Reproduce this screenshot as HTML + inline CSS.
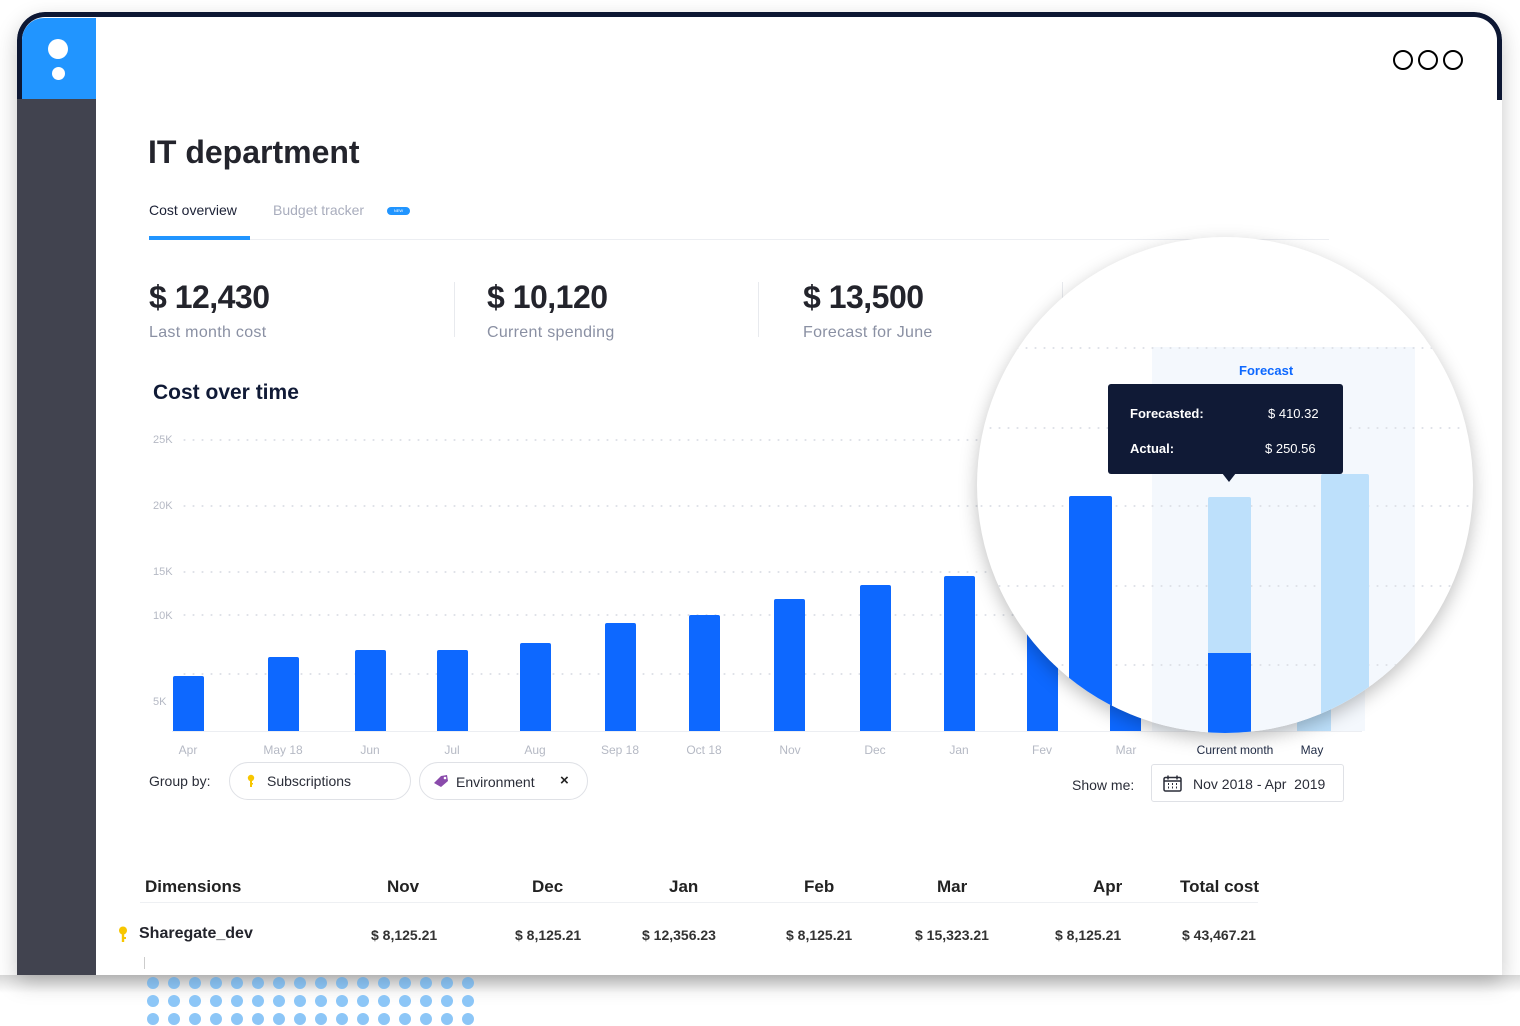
<!DOCTYPE html>
<html><head><meta charset="utf-8"><style>
*{margin:0;padding:0;box-sizing:border-box}
body{width:1520px;height:1026px;background:#fff;position:relative;overflow:hidden;font-family:"Liberation Sans",sans-serif;color:#1f2230}
.a{position:absolute;white-space:nowrap}
.bar{position:absolute;background:#0d68ff;border-radius:2px 2px 0 0}
.grid{position:absolute;height:2px;background-image:radial-gradient(circle,#dfe2e8 0.9px,transparent 1.2px);background-size:9px 2px}
.ax{position:absolute;font-size:11px;color:#b5b9c4}
.ml{position:absolute;font-size:12px;color:#b5b9c4;transform:translateX(-50%);top:743px}
.th{position:absolute;font-size:17px;font-weight:bold;color:#222;top:877px}
.td{position:absolute;font-size:14px;font-weight:bold;color:#333;top:927px}
.sv{position:absolute;top:279px;font-size:32px;font-weight:bold;color:#23242c;letter-spacing:-.5px}
.sl{position:absolute;top:324px;font-size:16px;color:#8a90a3;letter-spacing:.3px}
</style></head><body>
<div class="a" style="left:17px;top:12px;width:1485px;height:963px;background:#fff;border-radius:28px 28px 0 0;box-shadow:0 8px 22px rgba(0,0,0,.22);overflow:hidden">
  <div class="a" style="left:0;top:0;width:1485px;height:88px;border:5px solid #0d1733;border-bottom:none;border-radius:28px 28px 0 0"></div>
  <div class="a" style="left:5px;top:6px;width:74px;height:81px;background:#2195ff;border-radius:22px 0 0 0"></div>
  <div class="a" style="left:0;top:87px;width:79px;height:880px;background:#41434f"></div>
  <div class="a" style="left:31px;top:27px;width:20px;height:20px;border-radius:50%;background:#fff"></div>
  <div class="a" style="left:35px;top:55px;width:13px;height:13px;border-radius:50%;background:#fff"></div>
</div>
<div class="a" style="left:1393px;top:50px;width:20px;height:20px;border:2.5px solid #000;border-radius:50%"></div>
<div class="a" style="left:1418px;top:50px;width:20px;height:20px;border:2.5px solid #000;border-radius:50%"></div>
<div class="a" style="left:1443px;top:50px;width:20px;height:20px;border:2.5px solid #000;border-radius:50%"></div>

<div class="a" style="left:148px;top:134px;font-size:32px;font-weight:bold;color:#23242c">IT department</div>
<div class="a" style="left:149px;top:202px;font-size:14px;color:#1b2035">Cost overview</div>
<div class="a" style="left:273px;top:202px;font-size:14px;color:#a9adbd">Budget tracker</div>
<div class="a" style="left:387px;top:207px;width:23px;height:8px;border-radius:4px;background:#2195ff;color:#fff;font-size:4px;text-align:center;line-height:8px">NEW</div>
<div class="a" style="left:149px;top:239px;width:1180px;height:1px;background:#eceef2"></div>
<div class="a" style="left:149px;top:236px;width:101px;height:4px;background:#2195ff"></div>

<div class="sv" style="left:149px">$ 12,430</div>
<div class="sl" style="left:149px">Last month cost</div>
<div class="a" style="left:454px;top:282px;width:1px;height:55px;background:#e8eaee"></div>
<div class="sv" style="left:487px">$ 10,120</div>
<div class="sl" style="left:487px">Current spending</div>
<div class="a" style="left:758px;top:282px;width:1px;height:55px;background:#e8eaee"></div>
<div class="sv" style="left:803px">$ 13,500</div>
<div class="sl" style="left:803px">Forecast for June</div>
<div class="a" style="left:1062px;top:282px;width:1px;height:55px;background:#e8eaee"></div>

<div class="a" style="left:153px;top:381px;font-size:21px;font-weight:bold;color:#101a36">Cost over time</div>

<div class="ax" style="left:153px;top:434px">25K</div>
<div class="ax" style="left:153px;top:500px">20K</div>
<div class="ax" style="left:153px;top:566px">15K</div>
<div class="ax" style="left:153px;top:610px">10K</div>
<div class="ax" style="left:153px;top:696px">5K</div>
<div class="grid" style="left:180px;width:1200px;top:439px"></div>
<div class="grid" style="left:180px;width:1200px;top:505px"></div>
<div class="grid" style="left:180px;width:1200px;top:571px"></div>
<div class="grid" style="left:180px;width:1200px;top:614px"></div>
<div class="grid" style="left:180px;width:1200px;top:673px"></div>
<div class="a" style="left:172px;top:731px;width:1190px;height:1px;background:#eceef2"></div>
<div class="a" style="left:1152px;top:600px;width:213px;height:131px;background:#f4f8fd"></div>
<div class="a" style="left:1297px;top:600px;width:34px;height:131px;background:#bde0fb"></div>

<div class="bar" style="left:173px;top:676px;width:31px;height:55px"></div>
<div class="bar" style="left:268px;top:657px;width:31px;height:74px"></div>
<div class="bar" style="left:355px;top:650px;width:31px;height:81px"></div>
<div class="bar" style="left:437px;top:650px;width:31px;height:81px"></div>
<div class="bar" style="left:520px;top:643px;width:31px;height:88px"></div>
<div class="bar" style="left:605px;top:623px;width:31px;height:108px"></div>
<div class="bar" style="left:689px;top:615px;width:31px;height:116px"></div>
<div class="bar" style="left:774px;top:599px;width:31px;height:132px"></div>
<div class="bar" style="left:860px;top:585px;width:31px;height:146px"></div>
<div class="bar" style="left:944px;top:576px;width:31px;height:155px"></div>
<div class="bar" style="left:1027px;top:560px;width:31px;height:171px"></div>
<div class="bar" style="left:1110px;top:560px;width:31px;height:171px"></div>

<div class="ml" style="left:188px">Apr</div>
<div class="ml" style="left:283px">May 18</div>
<div class="ml" style="left:370px">Jun</div>
<div class="ml" style="left:452px">Jul</div>
<div class="ml" style="left:535px">Aug</div>
<div class="ml" style="left:620px">Sep 18</div>
<div class="ml" style="left:704px">Oct 18</div>
<div class="ml" style="left:790px">Nov</div>
<div class="ml" style="left:875px">Dec</div>
<div class="ml" style="left:959px">Jan</div>
<div class="ml" style="left:1042px">Fev</div>
<div class="ml" style="left:1126px">Mar</div>
<div class="ml" style="left:1235px;color:#1f2a44">Current month</div>
<div class="ml" style="left:1312px;color:#1f2a44">May</div>

<div class="a" style="left:977px;top:237px;width:496px;height:496px;border-radius:50%;overflow:hidden;background:#fff;box-shadow:0 6px 18px rgba(0,0,0,.25)">
  <div class="a" style="left:175px;top:110px;width:263px;height:400px;background:#f4f8fd"></div>
  <div class="grid" style="left:0;width:496px;top:110px"></div>
  <div class="grid" style="left:0;width:496px;top:190px"></div>
  <div class="grid" style="left:0;width:496px;top:268px"></div>
  <div class="grid" style="left:0;width:496px;top:348px"></div>
  <div class="grid" style="left:0;width:496px;top:427px"></div>
  <div class="a" style="left:262px;top:126px;font-size:13px;font-weight:bold;color:#0d68ff">Forecast</div>
  <div class="bar" style="left:92px;top:259px;width:43px;height:260px"></div>
  <div class="a" style="left:231px;top:260px;width:43px;height:260px;background:#bde0fb;border-radius:2px 2px 0 0"></div>
  <div class="a" style="left:231px;top:416px;width:43px;height:100px;background:#0d68ff"></div>
  <div class="a" style="left:344px;top:237px;width:48px;height:280px;background:#bde0fb;border-radius:2px 2px 0 0"></div>
  <div class="a" style="left:131px;top:147px;width:235px;height:90px;background:#101a36;border-radius:3px"></div>
  <div class="a" style="left:245px;top:236px;width:0;height:0;border-left:7px solid transparent;border-right:7px solid transparent;border-top:9px solid #101a36"></div>
  <div class="a" style="left:153px;top:169px;font-size:13px;font-weight:bold;color:#fff">Forecasted:</div>
  <div class="a" style="left:291px;top:169px;font-size:13px;color:#fff">$ 410.32</div>
  <div class="a" style="left:153px;top:204px;font-size:13px;font-weight:bold;color:#fff">Actual:</div>
  <div class="a" style="left:288px;top:204px;font-size:13px;color:#fff">$ 250.56</div>
</div>

<div class="a" style="left:149px;top:773px;font-size:14px;color:#2a2d38">Group by:</div>
<div class="a" style="left:229px;top:762px;width:182px;height:38px;border:1px solid #dfe1e6;border-radius:19px"></div>
<svg class="a" style="left:246px;top:774px" width="10" height="14" viewBox="0 0 10 14"><circle cx="5" cy="4" r="3.2" fill="#f7c600"/><rect x="4" y="5" width="2" height="8" fill="#f7c600"/><rect x="5" y="9" width="2" height="1.5" fill="#f7c600"/></svg>
<div class="a" style="left:267px;top:773px;font-size:14px;color:#2a2d38">Subscriptions</div>
<div class="a" style="left:419px;top:762px;width:169px;height:38px;border:1px solid #dfe1e6;border-radius:19px"></div>
<svg class="a" style="left:433px;top:774px" width="16" height="14" viewBox="0 0 16 14"><path d="M1 9 L8 2 L14 1 L15 7 L8 13 Z" fill="#8a4bab"/><circle cx="12" cy="4" r="1.3" fill="#fff"/></svg>
<div class="a" style="left:456px;top:774px;font-size:14px;color:#2a2d38">Environment</div>
<div class="a" style="left:560px;top:772px;font-size:15px;font-weight:bold;color:#222">×</div>

<div class="a" style="left:1072px;top:777px;font-size:14px;color:#2a2d38">Show me:</div>
<div class="a" style="left:1151px;top:764px;width:193px;height:38px;border:1px solid #dfe1e6;border-radius:3px"></div>
<svg class="a" style="left:1163px;top:775px" width="19" height="17" viewBox="0 0 19 17" fill="none" stroke="#2a2d38" stroke-width="1.5"><rect x="1" y="2.5" width="17" height="13.5" rx="1.5"/><path d="M5 0.5v4M14 0.5v4M1 6h17"/><path d="M5 9h1M9 9h1M13 9h1M5 12.5h1M9 12.5h1M13 12.5h1" stroke-width="2"/></svg>
<div class="a" style="left:1193px;top:776px;font-size:14px;color:#2a2d38">Nov 2018 - Apr&nbsp; 2019</div>

<div class="th" style="left:145px">Dimensions</div>
<div class="th" style="left:387px">Nov</div>
<div class="th" style="left:532px">Dec</div>
<div class="th" style="left:669px">Jan</div>
<div class="th" style="left:804px">Feb</div>
<div class="th" style="left:937px">Mar</div>
<div class="th" style="left:1093px">Apr</div>
<div class="th" style="left:1180px">Total cost</div>
<div class="a" style="left:140px;top:902px;width:1118px;height:1px;background:#eef0f3"></div>
<svg class="a" style="left:117px;top:926px" width="12" height="16" viewBox="0 0 12 16"><circle cx="6" cy="4.5" r="4" fill="#f7c600"/><rect x="4.8" y="6" width="2.4" height="10" fill="#f7c600"/><rect x="6" y="11" width="3" height="2" fill="#f7c600"/></svg>
<div class="a" style="left:139px;top:925px;font-size:16px;font-weight:bold;color:#23242c">Sharegate_dev</div>
<div class="td" style="left:371px">$ 8,125.21</div>
<div class="td" style="left:515px">$ 8,125.21</div>
<div class="td" style="left:642px">$ 12,356.23</div>
<div class="td" style="left:786px">$ 8,125.21</div>
<div class="td" style="left:915px">$ 15,323.21</div>
<div class="td" style="left:1055px">$ 8,125.21</div>
<div class="td" style="left:1182px">$ 43,467.21</div>
<div class="a" style="left:144px;top:957px;width:1px;height:12px;background:#ccc"></div>

<svg class="a" style="left:0;top:975px" width="1520" height="51">
<defs><linearGradient id="sh2" x1="0" y1="0" x2="0" y2="1"><stop offset="0" stop-color="#000" stop-opacity=".15"/><stop offset="1" stop-color="#000" stop-opacity="0"/></linearGradient></defs>
<g fill="#8cc6f7">
<circle cx="153" cy="8" r="6"/><circle cx="174" cy="8" r="6"/><circle cx="195" cy="8" r="6"/><circle cx="216" cy="8" r="6"/><circle cx="237" cy="8" r="6"/><circle cx="258" cy="8" r="6"/><circle cx="279" cy="8" r="6"/><circle cx="300" cy="8" r="6"/><circle cx="321" cy="8" r="6"/><circle cx="342" cy="8" r="6"/><circle cx="363" cy="8" r="6"/><circle cx="384" cy="8" r="6"/><circle cx="405" cy="8" r="6"/><circle cx="426" cy="8" r="6"/><circle cx="447" cy="8" r="6"/><circle cx="468" cy="8" r="6"/>
<circle cx="153" cy="26" r="6"/><circle cx="174" cy="26" r="6"/><circle cx="195" cy="26" r="6"/><circle cx="216" cy="26" r="6"/><circle cx="237" cy="26" r="6"/><circle cx="258" cy="26" r="6"/><circle cx="279" cy="26" r="6"/><circle cx="300" cy="26" r="6"/><circle cx="321" cy="26" r="6"/><circle cx="342" cy="26" r="6"/><circle cx="363" cy="26" r="6"/><circle cx="384" cy="26" r="6"/><circle cx="405" cy="26" r="6"/><circle cx="426" cy="26" r="6"/><circle cx="447" cy="26" r="6"/><circle cx="468" cy="26" r="6"/>
<circle cx="153" cy="44" r="6"/><circle cx="174" cy="44" r="6"/><circle cx="195" cy="44" r="6"/><circle cx="216" cy="44" r="6"/><circle cx="237" cy="44" r="6"/><circle cx="258" cy="44" r="6"/><circle cx="279" cy="44" r="6"/><circle cx="300" cy="44" r="6"/><circle cx="321" cy="44" r="6"/><circle cx="342" cy="44" r="6"/><circle cx="363" cy="44" r="6"/><circle cx="384" cy="44" r="6"/><circle cx="405" cy="44" r="6"/><circle cx="426" cy="44" r="6"/><circle cx="447" cy="44" r="6"/><circle cx="468" cy="44" r="6"/>
</g>
<rect x="0" y="0" width="1520" height="18" fill="url(#sh2)"/>
</svg>
</body></html>
